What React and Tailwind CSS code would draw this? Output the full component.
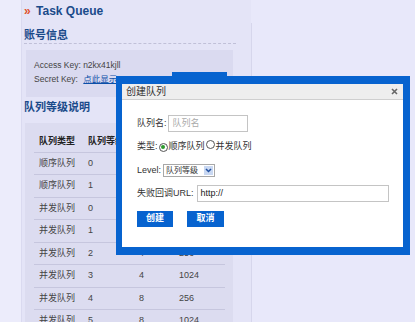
import React from "react";

const rows = [
  ["顺序队列", "0", "1", "256"],
  ["顺序队列", "1", "1", "1024"],
  ["并发队列", "0", "2", "256"],
  ["并发队列", "1", "2", "1024"],
  ["并发队列", "2", "4", "256"],
  ["并发队列", "3", "4", "1024"],
  ["并发队列", "4", "8", "256"],
  ["并发队列", "5", "8", "1024"],
];

function Radio({ checked }) {
  return (
    <span className="inline-flex w-[9px] h-[9px] rounded-full border border-[#555] bg-white items-center justify-center shrink-0">
      {checked && <span className="w-[4px] h-[4px] rounded-full bg-[#2e9a2e]" />}
    </span>
  );
}

export default function App() {
  return (
    <div className="relative w-[415px] h-[322px] overflow-hidden flex bg-[#e8e8fa] font-['Liberation_Sans','Noto_Sans_CJK_SC',sans-serif] text-[#333]">
      <div className="w-[22px] shrink-0 bg-[#ececfb] border-r border-[#dadaf0]" />
      <div className="w-[229px] shrink-0 bg-[#e4e4f7] pl-[2px] flex flex-col">
        <div className="pt-[4px] text-[12px] leading-[14px] font-bold text-[#1a4a8a] whitespace-nowrap">
          <span className="text-[#e0502a] mr-[2px]">»</span> Task Queue
        </div>
        <div className="mt-[10px] w-[212px] pb-[1px] border-b border-dashed border-[#c0c0d8] text-[11px] leading-[14px] font-bold text-[#1a4a8a]">
          账号信息
        </div>
        <div className="mt-[6px] ml-[2px] w-[207px] h-[47px] shrink-0 bg-[#dadaf0] pt-[8px] pl-[8px] text-[8.5px] leading-[14px] whitespace-nowrap text-[#444]">
          <div>Access Key: n2kx41kjll</div>
          <div>
            Secret Key: <span className="ml-[3px] text-[#0b4fa8] underline">点此显示</span>
          </div>
        </div>
        <div className="mt-[3px] text-[11px] leading-[14px] font-bold text-[#1a4a8a]">队列等级说明</div>
        <div className="mt-[9px] ml-[1px] w-[208px] flex-1 bg-[#dcdcf0] pl-[9px] pr-[8px] pt-[9px] text-[9px] whitespace-nowrap text-[#444]">
          <div className="h-[20.5px] flex items-center border-b border-[#c6c6de] font-bold text-[#222]">
            <div className="w-[54px] pl-[5px]">队列类型</div>
            <div className="w-[51px]">队列等级</div>
            <div className="w-[40px]">并发</div>
            <div className="flex-1">长度</div>
          </div>
          {rows.map((r, i) => (
            <div key={i} className="h-[22.5px] flex items-center border-b border-[#c6c6de]">
              <div className="w-[54px] pl-[5px]">{r[0]}</div>
              <div className="w-[51px]">{r[1]}</div>
              <div className="w-[40px]">{r[2]}</div>
              <div className="flex-1">{r[3]}</div>
            </div>
          ))}
        </div>
      </div>
      <div className="flex-1 pt-[23px] flex">
        <div className="border-l border-[#d6d6ec]" />
      </div>

      <div className="absolute left-[172px] top-[72px] w-[55px] h-[6px] bg-[#0763cf]" />
      <div className="absolute left-[116px] top-[76px] w-[294px] h-[179px] bg-[#0763cf] pl-[6px] pr-[7px] py-[8px]">
        <div className="h-full bg-white flex flex-col">
          <div className="h-[16px] shrink-0 bg-[#eeeeee] border-b border-[#cfcfcf] flex items-center pl-[4px] pr-[5px] text-[10px] text-[#333]">
            <span>创建队列</span>
            <svg className="ml-auto" width="7" height="7" viewBox="0 0 7 7">
              <path d="M1 1L6 6M6 1L1 6" stroke="#666" strokeWidth="1.6" />
            </svg>
          </div>
          <div className="pl-[15px] pt-[15px] text-[9px] whitespace-nowrap text-[#333]">
            <div className="flex items-center h-[17px]">
              <span>队列名:</span>
              <div className="ml-[1px] w-[80px] h-[17px] border border-[#c4c4c4] pl-[4px] flex items-center text-[#aaa]">
                队列名
              </div>
            </div>
            <div className="mt-[8px] h-[14px] flex items-center">
              <span>类型:</span>
              <span className="ml-[1px]"><Radio checked /></span>
              <span className="ml-[1px]">顺序队列</span>
              <span className="ml-[1px]"><Radio /></span>
              <span className="ml-[1px]">并发队列</span>
            </div>
            <div className="mt-[10px] h-[13px] flex items-center">
              <span>Level:</span>
              <div className="ml-[2px] w-[52px] h-[13px] border border-[#a8a8a8] flex items-center">
                <span className="pl-[2px] text-[8px]">队列等级</span>
                <div className="ml-auto mr-[1px] w-[9px] h-[9px] bg-[#c9d8f2] flex items-center justify-center">
                  <svg width="7" height="5" viewBox="0 0 7 5">
                    <path d="M1 1L3.5 3.5L6 1" stroke="#1f4fa0" strokeWidth="1.5" fill="none" />
                  </svg>
                </div>
              </div>
            </div>
            <div className="mt-[8px] h-[17px] flex items-center">
              <span>失败回调URL:</span>
              <div className="ml-[3px] w-[192px] h-[17px] border border-[#c4c4c4] pl-[3px] flex items-center text-[#222]">
                http://
              </div>
            </div>
            <div className="mt-[9px] flex">
              <div className="w-[36px] h-[16px] bg-[#0763cf] text-white font-bold flex items-center justify-center">创建</div>
              <div className="ml-[14px] w-[37px] h-[16px] bg-[#0763cf] text-white font-bold flex items-center justify-center">取消</div>
            </div>
          </div>
        </div>
      </div>
    </div>
  );
}
